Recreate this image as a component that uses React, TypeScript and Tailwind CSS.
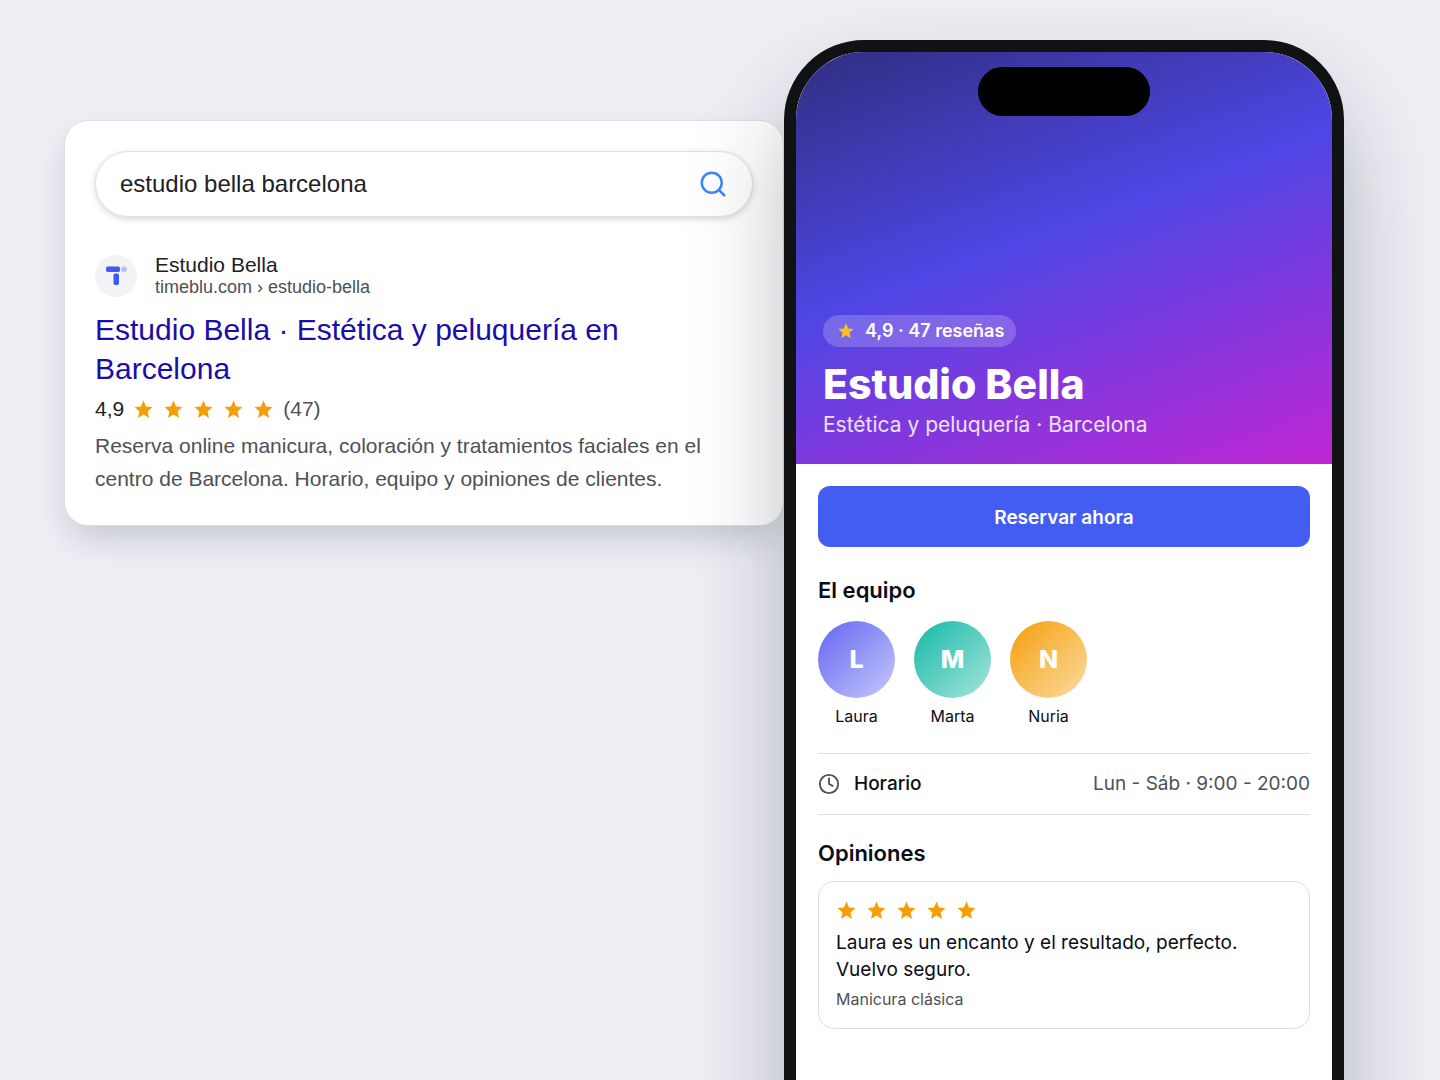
import React, { useState } from 'react';
import { Clock, Search } from 'lucide-react';

// ============================================================
// Types
// ============================================================

interface TeamMember {
  name: string;
  gradient: string;
}

const TEAM: TeamMember[] = [
  { name: 'Laura', gradient: 'bg-[linear-gradient(135deg,#6366f1,#c7c8fb)]' },
  { name: 'Marta', gradient: 'bg-[linear-gradient(135deg,#14b8a6,#a6e5dc)]' },
  { name: 'Nuria', gradient: 'bg-[linear-gradient(135deg,#f59e0b,#fbdca2)]' },
];

// ============================================================
// Stars
// ============================================================

function Star({ className }: { className: string }) {
  return (
    <svg viewBox="0 0 24 24" className={className} fill="currentColor" aria-hidden="true">
      <path d="M12 17.6 18.3 21.6l-1.6-7.4L22.2 9.2l-7.3-.7L12 1.7 9.1 8.5 1.8 9.2l5.5 5L5.7 21.6z" />
    </svg>
  );
}

function Stars() {
  return (
    <div className="flex gap-[9px] text-[#f59e0b]" role="img" aria-label="5 de 5">
      {[1, 2, 3, 4, 5].map((n) => (
        <Star key={n} className="size-[21px]" />
      ))}
    </div>
  );
}

// ============================================================
// Search result
// ============================================================

function SearchCard() {
  const [query, setQuery] = useState('estudio bella barcelona');

  return (
    <section className="mt-[120px] min-w-0 flex-1 self-start rounded-3xl border border-[#dcdee3] bg-white p-[30px] font-['Liberation_Sans',Arial,sans-serif] shadow-[0_16px_36px_-8px_rgba(16,24,40,0.22)]">
      <form
        onSubmit={(e) => e.preventDefault()}
        className="flex h-[66px] items-center rounded-full border border-[#dfe1e5] bg-white px-6 shadow-[0_2px_6px_rgba(32,33,36,0.18)]"
      >
        <input
          type="text"
          aria-label="Buscar"
          value={query}
          onChange={(e) => setQuery(e.target.value)}
          className="min-w-0 flex-1 bg-transparent text-2xl text-[#202124] outline-none"
        />
        <button type="submit" aria-label="Buscar" className="text-[#4285f4]">
          <Search className="size-[30px]" strokeWidth={2} />
        </button>
      </form>

      <div className="mt-[37px] flex items-center gap-[18px]">
        <div className="flex size-[42px] shrink-0 items-center justify-center rounded-full bg-[#f1f3f4]">
          <svg viewBox="0 0 24 24" className="size-6" aria-hidden="true">
            <rect x="2" y="2.5" width="14" height="5.5" rx="1.8" fill="#4459f0" />
            <rect x="9.5" y="9.5" width="5.5" height="11.5" rx="1.8" fill="#4459f0" />
            <circle cx="20" cy="5.3" r="2.9" fill="#b9bdfa" />
          </svg>
        </div>
        <div>
          <p className="text-[21px] leading-[22px] text-[#202124]">Estudio Bella</p>
          <p className="text-lg leading-[22px] text-[#4d5156]">timeblu.com › estudio-bella</p>
        </div>
      </div>

      <h2 className="mt-3 text-[30px] leading-[39px] text-[#1a0dab]">
        <a href="#estudio-bella">Estudio Bella · Estética y peluquería en Barcelona</a>
      </h2>

      <div className="mt-[9px] flex items-center gap-[9px] text-[21px] leading-6">
        <span className="text-[#202124]">4,9</span>
        <Stars />
        <span className="text-[#4d5156]">(47)</span>
      </div>
      <p className="mt-2 text-[21px] leading-[33px] text-[#4d5156]">
        Reserva online manicura, coloración y tratamientos faciales en el centro de Barcelona. Horario, equipo y
        opiniones de clientes.
      </p>
    </section>
  );
}

// ============================================================
// Phone
// ============================================================

function Hero() {
  return (
    <header className="relative flex h-[412px] flex-col items-start justify-end bg-[linear-gradient(160deg,#312e81,#4f46e5_45%,#c026d3)] px-[27px] pb-[23px] text-white">
      <div className="absolute left-1/2 top-[15px] h-[49px] w-[172px] -translate-x-1/2 rounded-full bg-black" />
      <p className="flex h-8 items-center gap-[10px] rounded-full bg-white/20 pr-3 pl-[14px] text-lg font-semibold">
        <Star className="size-[18px] text-[#fbbf24]" />
        4,9 · 47 reseñas
      </p>
      <h1 className="mt-3 text-[41px] leading-[50px] font-extrabold">Estudio Bella</h1>
      <p className="text-[21px] leading-8 text-white/85">Estética y peluquería · Barcelona</p>
    </header>
  );
}

function Phone() {
  return (
    <main className="relative mt-10 min-h-[1160px] w-[560px] shrink-0 rounded-[80px] border-12 border-[#111214] bg-white font-['Inter',sans-serif] text-[#0a0d14] shadow-[0_50px_100px_-10px_rgba(15,23,32,0.34)]">
      <div className="overflow-hidden rounded-t-[68px]">
        <Hero />
        <div className="px-[22px] pt-[22px]">
          <button
            type="button"
            className="h-[61px] w-full rounded-xl bg-[#445df1] pt-[3px] text-[19px] font-semibold text-white"
          >
            Reservar ahora
          </button>

          <h2 className="mt-[27px] text-[22px] leading-8 font-semibold">El equipo</h2>
          <ul className="mt-[15px] flex gap-[19px]">
            {TEAM.map((member) => (
              <li key={member.name} className="flex w-[77px] flex-col items-center">
                <span
                  className={`flex size-[77px] items-center justify-center rounded-full text-[25px] font-extrabold text-white ${member.gradient}`}
                >
                  {member.name[0]}
                </span>
                <span className="mt-[6px] text-base">{member.name}</span>
              </li>
            ))}
          </ul>

          <div className="mt-[25px] flex h-[62px] items-center border-y border-[#dcdee1] text-[19px]">
            <Clock className="size-[22px] text-[#4d5156]" strokeWidth={2} />
            <span className="ml-[14px] font-medium">Horario</span>
            <span className="ml-auto text-[#4d5156]">Lun - Sáb · 9:00 - 20:00</span>
          </div>

          <h2 className="mt-[22px] text-[22px] leading-8 font-semibold">Opiniones</h2>
          <article className="mt-3 rounded-2xl border border-[#dcdee1] px-[17px] pt-[18px] pb-[17px]">
            <Stars />
            <p className="mt-2 text-[19px] leading-[27px]">
              Laura es un encanto y el resultado, perfecto. Vuelvo seguro.
            </p>
            <p className="mt-1 text-base text-[#4d5156]">Manicura clásica</p>
          </article>
        </div>
      </div>
    </main>
  );
}

// ============================================================
// Page
// ============================================================

export default function App() {
  return (
    <div className="flex h-screen overflow-hidden bg-[#eeeff5] pr-24 pl-16">
      <SearchCard />
      <Phone />
    </div>
  );
}
